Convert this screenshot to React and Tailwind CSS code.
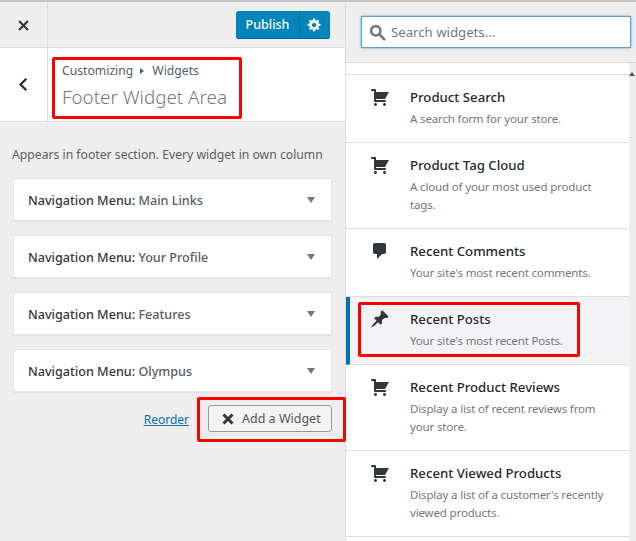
import React from 'react';

const CLOSE_PATH = 'M14.95 6.46L11.41 10l3.54 3.54-1.41 1.41L10 11.42l-3.53 3.53-1.42-1.42L8.58 10 5.05 6.47l1.42-1.42L10 8.58l3.54-3.53z';
const CART_PATH = 'M6 13h9c.55 0 1 .45 1 1s-.45 1-1 1H5c-.55 0-1-.45-1-1V4H2c-.55 0-1-.45-1-1s.45-1 1-1h3c.55 0 1 .45 1 1v2h13l-4 7H6v1zm-.5 3c.83 0 1.5.67 1.5 1.5S6.33 19 5.5 19 4 18.33 4 17.5 4.67 16 5.5 16zm9 0c.83 0 1.5.67 1.5 1.5s-.67 1.5-1.5 1.5-1.5-.67-1.5-1.5.67-1.5 1.5-1.5z';
const COMMENT_PATH = 'M5 2h9c1.1 0 2 .9 2 2v7c0 1.1-.9 2-2 2h-2l-5 5v-5H5c-1.1 0-2-.9-2-2V4c0-1.1.9-2 2-2z';
const PIN_PATH = 'M10.44 3.02l1.82-1.82 6.36 6.35-1.83 1.82c-1.05-.68-2.48-.57-3.41.36l-.75.75c-.92.93-1.04 2.36-.35 3.41l-1.83 1.82-2.41-2.41-2.8 2.79c-.42.42-3.38 2.71-3.8 2.29s1.86-3.39 2.28-3.81l2.79-2.79L4.1 9.36l1.83-1.82c1.05.69 2.48.57 3.4-.36l.75-.75c.93-.92 1.05-2.35.36-3.41z';
const GEAR_PATH = 'M18 12h-2.18c-.17.7-.44 1.35-.81 1.93l1.54 1.54-2.1 2.1-1.54-1.54c-.58.36-1.23.64-1.91.81V19H8v-2.18c-.68-.17-1.33-.45-1.91-.81l-1.54 1.54-2.12-2.12 1.54-1.54c-.36-.58-.63-1.23-.8-1.89H1V9h2.18c.17-.7.44-1.35.81-1.93L2.45 5.53l2.1-2.1 1.54 1.54c.58-.36 1.23-.64 1.91-.81V2h3v2.18c.68.17 1.33.45 1.91.81l1.54-1.54 2.12 2.12-1.54 1.54c.36.58.63 1.23.8 1.89H18v3zm-8.5 1.5c1.66 0 3-1.34 3-3s-1.34-3-3-3-3 1.34-3 3 1.34 3 3 3z';

const Icon = ({ d, className }) => (
  <svg viewBox="0 0 20 20" className={className} fill="currentColor">
    <path d={d} />
  </svg>
);

const navWidgets = ['Main Links', 'Your Profile', 'Features', 'Olympus'];

const availableWidgets = [
  { title: 'Product Search', desc: 'A search form for your store.', icon: CART_PATH, h: 'h-[68px]' },
  { title: 'Product Tag Cloud', desc: 'A cloud of your most used product tags.', icon: CART_PATH, h: 'h-[86px]' },
  { title: 'Recent Comments', desc: "Your site's most recent comments.", icon: COMMENT_PATH, h: 'h-[68px]' },
  { title: 'Recent Posts', desc: "Your site's most recent Posts.", icon: PIN_PATH, h: 'h-[68px]', active: true },
  { title: 'Recent Product Reviews', desc: 'Display a list of recent reviews from your store.', icon: CART_PATH, h: 'h-[86px]' },
  { title: 'Recent Viewed Products', desc: "Display a list of a customer's recently viewed products.", icon: CART_PATH, h: 'h-[86px]' },
];

const App = () => {
  return (
    <div className="relative flex h-[541px] w-[636px] overflow-hidden border-t-2 border-[#c4c4c4] bg-[#eeeeee] font-['Noto_Sans','Open_Sans',sans-serif]">
      {/* Customizer pane */}
      <div className="flex w-[346px] shrink-0 flex-col border-r border-[#dddddd]">
        <div className="flex h-[46px] shrink-0 items-center border-b border-[#dddddd]">
          <div className="flex h-full w-[48px] items-center justify-center border-r border-[#dddddd] pt-[1px] text-[#32373c]">
            <Icon d={CLOSE_PATH} className="h-[21px] w-[21px]" />
          </div>
          <div className="ml-auto mr-[15px] flex h-[28px] overflow-hidden rounded-[3px] bg-[#0085ba] text-white shadow-[inset_0_-1px_0_#006799]">
            <div className="flex w-[64px] items-center justify-center border-r border-[#006799] pt-[1px] text-[12.5px] font-medium">Publish</div>
            <div className="flex w-[30px] items-center justify-center pr-[1px]">
              <Icon d={GEAR_PATH} className="h-[15px] w-[15px]" />
            </div>
          </div>
        </div>

        <div className="flex h-[74px] shrink-0 border-b border-[#dddddd] bg-white">
          <div className="flex w-[48px] items-center justify-center border-r border-[#dddddd] pr-[1px]">
            <svg viewBox="0 0 12 18" className="h-[15px] w-[10px]" fill="none" stroke="#23282d" strokeWidth="2.6">
              <path d="M10 2L3 9l7 7" />
            </svg>
          </div>
          <div className="pl-[14px] pt-[14px]">
            <div className="flex items-center text-[12.2px] leading-[18px] text-[#555d66]">
              Customizing
              <span className="ml-[7px] mr-[8px] h-0 w-0 border-y-[3px] border-l-[4px] border-y-transparent border-l-[#555d66]" />
              Widgets
            </div>
            <div className="mt-[4px] text-[18.8px] font-light leading-[27px] text-[#72777c]">Footer Widget Area</div>
          </div>
        </div>

        <p className="mt-[24px] pl-[12px] text-[12.2px] leading-[18px] text-[#555d66]">
          Appears in footer section. Every widget in own column
        </p>

        <div className="mt-[14px] flex flex-col gap-[14px] pl-[13px] pr-[13px]">
          {navWidgets.map((name) => (
            <div key={name} className="flex h-[43px] items-center justify-between border border-[#e5e5e5] bg-white pl-[14px] pr-[16px] pt-[3px] shadow-[0_1px_1px_rgba(0,0,0,0.04)]">
              <span className="text-[12.6px] font-medium text-[#32373c]">
                Navigation Menu: <span className="text-[#555d66]">{name}</span>
              </span>
              <span className="mb-[3px] h-0 w-0 border-x-[4.5px] border-t-[6px] border-x-transparent border-t-[#72777c]" />
            </div>
          ))}
        </div>

        <div className="mt-[13px] flex items-center justify-end pr-[13px]">
          <a href="#" className="mr-[19px] pt-[2px] text-[12px] text-[#0073aa] underline">Reorder</a>
          <button className="flex h-[27px] w-[124px] items-center rounded-[3px] border border-[#999999] bg-[#f3f3f3] pl-[13px] pt-[1px] text-[12.5px] text-[#555555]">
            <svg viewBox="0 0 12 12" className="mr-[8px] h-[12px] w-[12px]" fill="none" stroke="#32373c" strokeWidth="3">
              <path d="M1.500 1.500l9 9M10.500 1.500l-9 9" />
            </svg>
            Add a Widget
          </button>
        </div>
      </div>

      {/* Available widgets pane */}
      <div className="flex min-w-0 flex-1 flex-col">
        <div className="flex h-[61px] shrink-0 items-start border-b border-[#dddddd] pl-[15px] pr-[5px] pt-[14px]">
          <div className="flex h-[32px] w-full items-center border border-[#5b9dd9] bg-white pl-[7px] shadow-[0_0_2px_rgba(30,140,190,0.8)]">
            <svg viewBox="0 0 20 20" className="h-[17px] w-[17px]" fill="none" stroke="#72777c" strokeWidth="3">
              <circle cx="8" cy="8" r="5.5" />
              <path d="M12 12l6 6" strokeLinecap="round" />
            </svg>
            <span className="ml-[5px] pt-[1px] text-[13.2px] text-[#72777c]">Search widgets...</span>
          </div>
        </div>

        <div className="flex min-h-0 flex-1">
          <div className="min-w-0 flex-1 bg-white pt-[11px]">
            <div className="border-t border-[#dddddd]" />
            {availableWidgets.map((w) => (
              <div
                key={w.title}
                className={`flex ${w.h} border-b border-[#dddddd] ${w.active ? 'border-l-4 border-l-[#0073aa] bg-[#f3f3f5] pl-[20px]' : 'pl-[24px]'}`}
              >
                <Icon d={w.icon} className="mt-[12px] h-[20px] w-[20px] shrink-0 text-[#32373c]" />
                <div className="ml-[20px] pr-[14px] pt-[12px]">
                  <div className="text-[13.2px] font-medium leading-[20px] text-[#23282d]">{w.title}</div>
                  <div className="mt-[3px] text-[11.5px] leading-[18px] tracking-[-0.15px] text-[#72777c]">{w.desc}</div>
                </div>
              </div>
            ))}
          </div>
          <div className="relative w-[7px] shrink-0 bg-[#eeeeee]">
            <span className="absolute left-[0px] top-[9px] h-0 w-0 border-x-[3px] border-b-[4px] border-x-transparent border-b-[#555555]" />
          </div>
        </div>
      </div>

      {/* Red annotation boxes */}
      <div className="absolute left-[52px] top-[55px] h-[62px] w-[190px] rounded-[2px] border-[3px] border-[#ff0000]" />
      <div className="absolute left-[197px] top-[395px] h-[45px] w-[149px] rounded-[2px] border-[3px] border-[#ff0000]" />
      <div className="absolute left-[358px] top-[300px] h-[55px] w-[222px] rounded-[2px] border-[3px] border-[#ff0000]" />
    </div>
  );
};

export default App;
